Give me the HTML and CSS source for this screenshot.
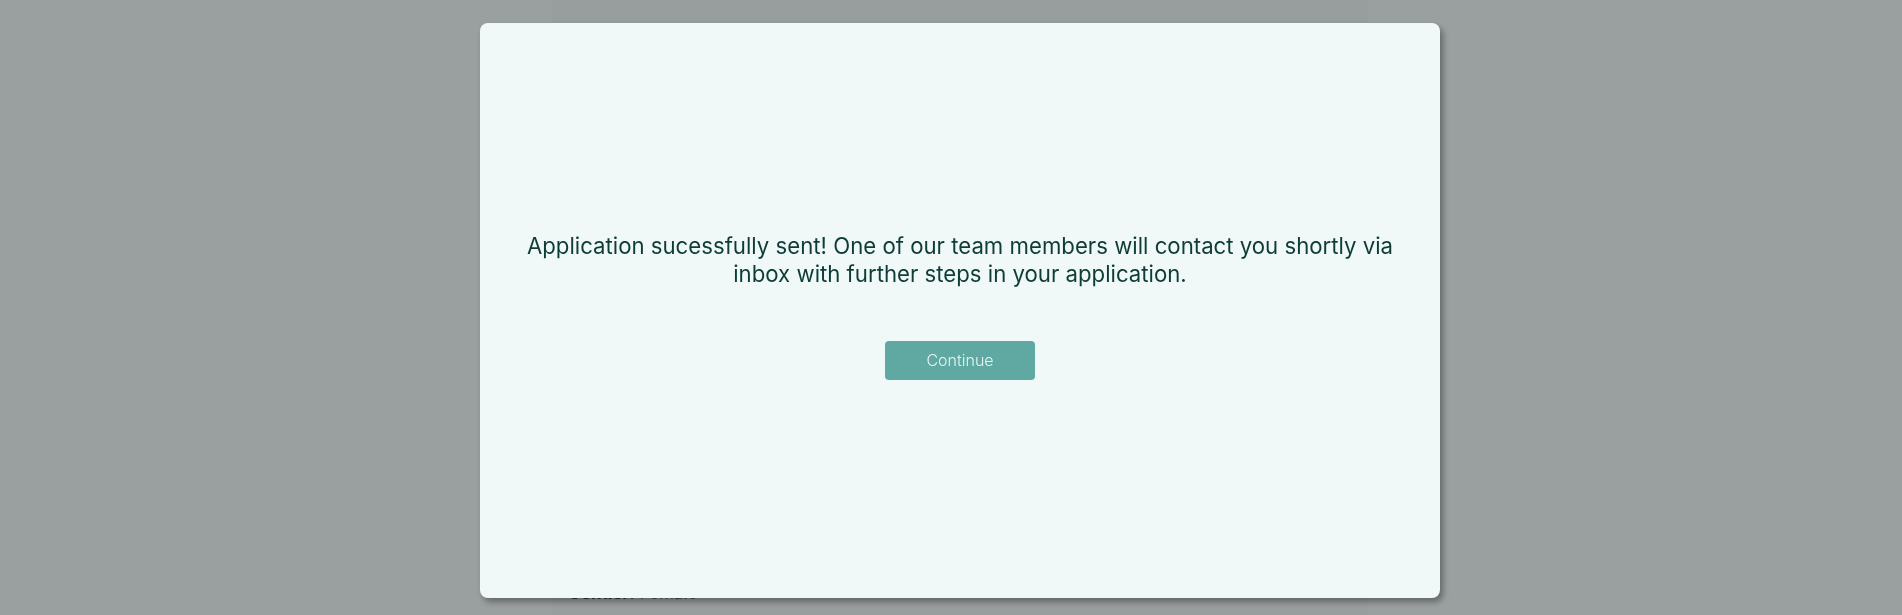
FILE: index.html
```html
<!DOCTYPE html>
<html lang="en">
<head>
<meta charset="utf-8">
<title>Application sent</title>
<link rel="stylesheet" href="styles.css">
</head>
<body>
<div class="page">
  <div class="page-column">
    <p class="detail"><b>Gender:</b> <span class="value">Female</span></p>
  </div>
</div>
<div class="overlay">
  <div class="modal">
    <p class="message">Application sucessfully sent! One of our team members will contact you shortly via inbox with further steps in your application.</p>
    <button class="btn" type="button">Continue</button>
  </div>
</div>
</body>
</html>
```
FILE: styles.css
```css
html, body {
  margin: 0;
  height: 100%;
}
body {
  background: #f4f6f6;
  font-family: Inter, "Noto Sans", sans-serif;
  overflow: hidden;
}
.page {
  display: flex;
  justify-content: center;
  height: 100%;
  padding-left: 18px;
}
.page-column {
  width: 816px;
  background: #f0f3f2;
  padding: 583px 16px 0;
  box-sizing: border-box;
}
.detail {
  margin: 0;
  font-size: 17px;
  color: #1a1a1a;
}
.value {
  color: #555;
}
.overlay {
  position: fixed;
  inset: 0;
  background: rgba(70, 78, 78, 0.52);
  display: flex;
  justify-content: center;
  align-items: flex-start;
  padding: 23px 0 0 18px;
}
.modal {
  width: 960px;
  height: 575px;
  box-sizing: border-box;
  background: #f0f9f8;
  border-radius: 8px;
  box-shadow: 3px 4px 6px rgba(0, 0, 0, 0.35);
  display: flex;
  flex-direction: column;
  align-items: center;
  justify-content: center;
  padding: 0 40px 10px;
}
.message {
  margin: 0 0 53px;
  font-size: 22.2px;
  line-height: 28px;
  color: #0e3d37;
  text-align: center;
}
.btn {
  width: 150px;
  height: 39px;
  border: none;
  border-radius: 4px;
  background: #5fa9a2;
  color: #e6f5f3;
  font-family: inherit;
  font-size: 16px;
  font-weight: 300;
}
```
